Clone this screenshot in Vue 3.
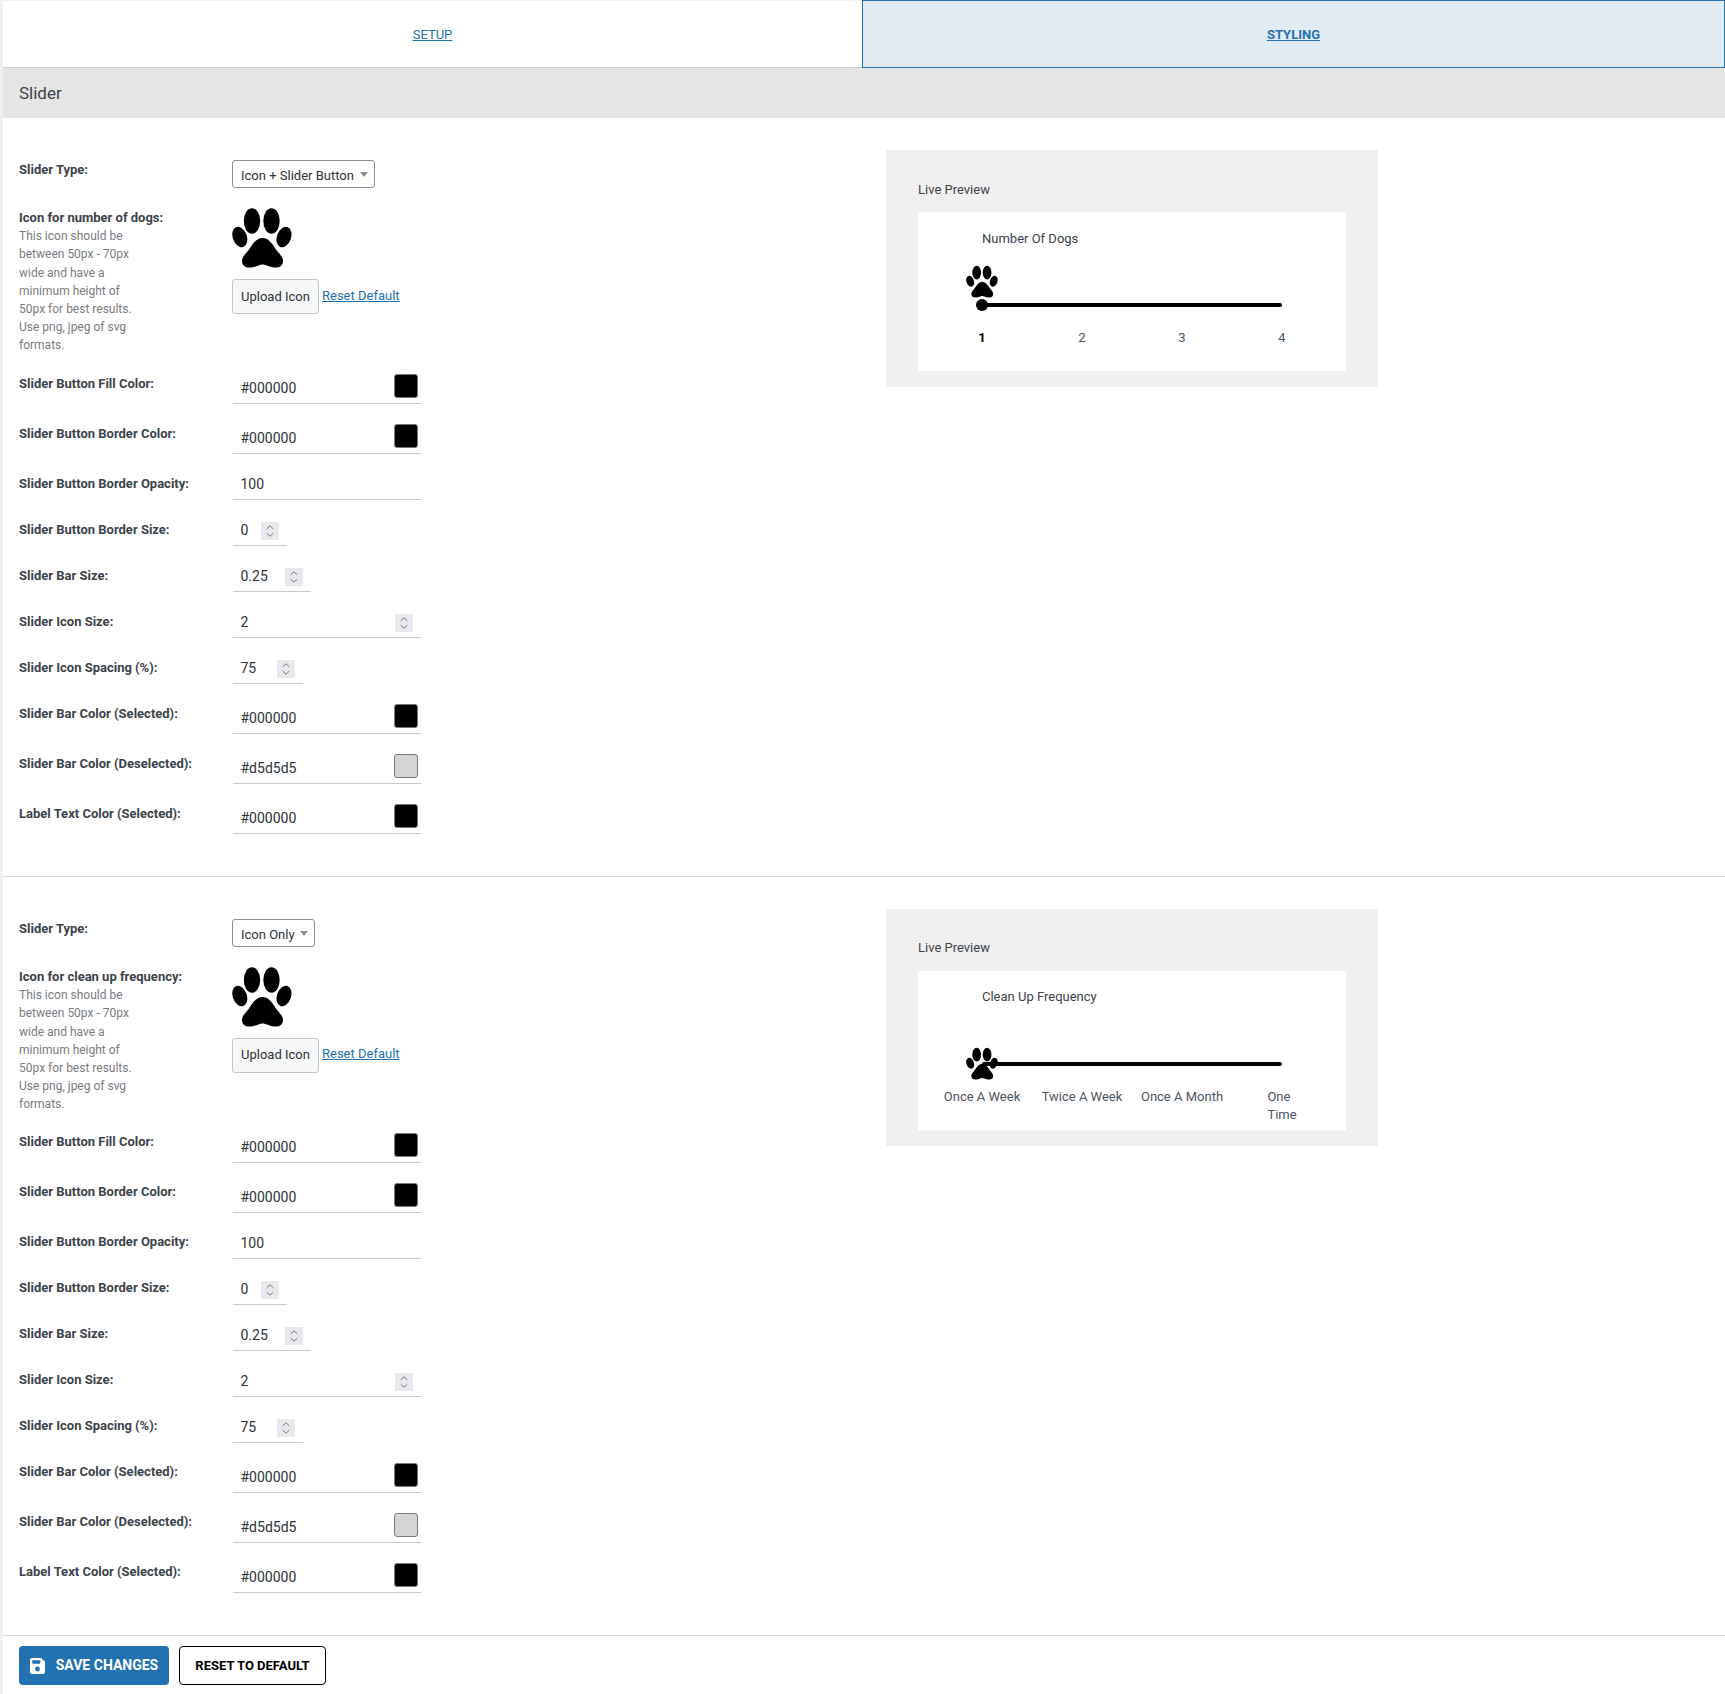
<script setup>
const sections = [
  {
    type: 'Icon + Slider Button',
    selectClass: 'select-wide',
    iconLabel: 'Icon for number of dogs:',
    title: 'Number Of Dogs',
    mode: 'button',
    sectionClass: '',
    labels: ['1', '2', '3', '4']
  },
  {
    type: 'Icon Only',
    selectClass: 'select-narrow',
    iconLabel: 'Icon for clean up frequency:',
    title: 'Clean Up Frequency',
    mode: 'icon',
    sectionClass: 'section-second',
    labels: ['Once A Week', 'Twice A Week', 'Once A Month', 'One Time']
  }
]

const rows = [
  { kind: 'color', label: 'Slider Button Fill Color:', value: '#000000', color: '#000000' },
  { kind: 'color', label: 'Slider Button Border Color:', value: '#000000', color: '#000000' },
  { kind: 'text', label: 'Slider Button Border Opacity:', value: '100', width: 188 },
  { kind: 'number', label: 'Slider Button Border Size:', value: '0', width: 54 },
  { kind: 'number', label: 'Slider Bar Size:', value: '0.25', width: 78 },
  { kind: 'number', label: 'Slider Icon Size:', value: '2', width: 188 },
  { kind: 'number', label: 'Slider Icon Spacing (%):', value: '75', width: 70 },
  { kind: 'color', label: 'Slider Bar Color (Selected):', value: '#000000', color: '#000000' },
  { kind: 'color', label: 'Slider Bar Color (Deselected):', value: '#d5d5d5', color: '#d5d5d5' },
  { kind: 'color', label: 'Label Text Color (Selected):', value: '#000000', color: '#000000' }
]
</script>

<template>
  <div class="page">
    <svg width="0" height="0" class="defs" aria-hidden="true">
      <symbol id="paw" viewBox="0 0 60 61">
        <ellipse cx="20" cy="14" rx="8.2" ry="12.8" />
        <ellipse cx="39.5" cy="14" rx="8.2" ry="12.8" />
        <ellipse cx="7.8" cy="30" rx="7" ry="10.6" transform="rotate(-20 7.8 30)" />
        <ellipse cx="52" cy="30" rx="7" ry="10.6" transform="rotate(20 52 30)" />
        <path d="M30.5 31C36 31 40 36 43 41C46 46 51 49 51 54C51 59 47 61 42 60.5C37 60 34 57.5 30.5 57.5C27 57.5 24 60 19 60.5C14 61 10 59 10 54C10 49 15 46 18 41C21 36 25 31 30.5 31Z" />
      </symbol>
    </svg>

    <nav class="tabs">
      <a class="tab tab-setup" href="#">SETUP</a>
      <a class="tab tab-styling" href="#">STYLING</a>
    </nav>

    <h2 class="heading">Slider</h2>

    <section v-for="s in sections" :key="s.title" class="section" :class="s.sectionClass">
      <div class="form">
        <div class="row row-select">
          <div class="label">Slider Type:</div>
          <div class="select" :class="s.selectClass">
            <span>{{ s.type }}</span>
            <i class="caret"></i>
          </div>
        </div>

        <div class="row row-icon">
          <div class="label icon-label">
            <div>{{ s.iconLabel }}</div>
            <div class="desc">This icon should be between 50px - 70px wide and have a minimum height of 50px for best results. Use png, jpeg of svg formats.</div>
          </div>
          <div class="icon-field">
            <svg class="paw-large"><use href="#paw" /></svg>
            <div class="upload-line">
              <button class="upload" type="button">Upload Icon</button>
              <a class="link" href="#">Reset Default</a>
            </div>
          </div>
        </div>

        <div v-for="r in rows" :key="r.label" class="row" :class="r.kind === 'color' ? 'row-color' : 'row-num'">
          <div class="label">{{ r.label }}</div>
          <div v-if="r.kind === 'color'" class="input input-color">
            <span>{{ r.value }}</span>
            <i class="swatch" :style="{ background: r.color }"></i>
          </div>
          <div v-else class="input input-num" :style="{ width: r.width + 'px' }">
            <span class="num-value">{{ r.value }}</span>
            <svg v-if="r.kind === 'number'" class="spin" viewBox="0 0 18 18">
              <path d="M5.7 6.8 9 3.8l3.3 3M5.7 11.2 9 14.2l3.3-3" />
            </svg>
          </div>
        </div>
      </div>

      <aside class="preview">
        <div class="preview-title">Live Preview</div>
        <div class="preview-card">
          <div class="slider-title">{{ s.title }}</div>
          <div class="track" :class="'track-' + s.mode">
            <svg class="paw-small"><use href="#paw" /></svg>
            <i v-if="s.mode === 'button'" class="knob"></i>
          </div>
          <div class="ticks">
            <div v-for="(l, i) in s.labels" :key="l" class="tick" :class="{ 'tick-on': s.mode === 'button' && i === 0 }">
              <span :class="{ 'tick-wrap': l === 'One Time' }">{{ l }}</span>
            </div>
          </div>
        </div>
      </aside>
    </section>

    <footer class="footer">
      <button class="btn btn-save" type="button">
        <svg class="save-icon" viewBox="0 0 15 16">
          <path fill-rule="evenodd" d="M2 0h9.3L15 3.7V14a2 2 0 0 1-2 2H2a2 2 0 0 1-2-2V2a2 2 0 0 1 2-2ZM3 2.2a.8.8 0 0 0-.8.8v2a.8.8 0 0 0 .8.8h6.5a.8.8 0 0 0 .8-.8V3a.8.8 0 0 0-.8-.8ZM7.5 8.6a2.4 2.4 0 1 0 0 4.8 2.4 2.4 0 0 0 0-4.8Z" />
        </svg>
        <span class="save-text">SAVE CHANGES</span>
      </button>
      <button class="btn btn-reset" type="button">RESET TO DEFAULT</button>
    </footer>
  </div>
</template>

<style>
body {
  background: #f0f0f1;
}
</style>

<style scoped>
.page {
  margin-left: 3px;
  height: 1694px;
  background: #fff;
  font-family: Roboto, "Liberation Sans", sans-serif;
  font-size: 13px;
  line-height: 18.2px;
  color: #3c434a;
  overflow: hidden;
}
.defs {
  position: absolute;
}
.tabs {
  display: flex;
  height: 68px;
}
.tab {
  display: flex;
  align-items: center;
  justify-content: center;
  box-sizing: border-box;
  padding-top: 2px;
  color: #2271b1;
}
.tab-setup {
  width: 859px;
  border-top: 1px solid #f0f0f1;
  border-bottom: 1px solid #ccc;
}
.tab-styling {
  flex: 1;
  border: 1px solid #2271b1;
  background: #e1ebf4;
  font-weight: 700;
}
.heading {
  margin: 0;
  height: 50px;
  padding-left: 16px;
  background: #e5e5e5;
  font-size: 17px;
  font-weight: 400;
  line-height: 50px;
}
.section {
  display: flex;
  box-sizing: border-box;
  height: 759px;
  border-bottom: 1px solid #ddd;
}
.form {
  flex: 0 0 883px;
  box-sizing: border-box;
  padding: 42px 0 0 16px;
}
.row {
  display: flex;
}
.label {
  flex: 0 0 213px;
  font-weight: 700;
}
.row-select .label {
  padding-top: 1px;
}
.row-icon {
  margin-top: 19px;
  height: 147px;
}
.row-color {
  margin-top: 10px;
  height: 40px;
}
.row-color .label {
  padding-top: 11px;
}
.row-num {
  margin-top: 16px;
  height: 30px;
}
.row-num .label {
  padding-top: 5px;
}
.section-second .row-color .label {
  padding-top: 10px;
}
.section-second .row-num .label {
  padding-top: 4px;
}
.select {
  display: flex;
  align-items: center;
  box-sizing: border-box;
  height: 28px;
  padding: 4px 0 0 8px;
  border: 1px solid #8c8f94;
  border-radius: 3px;
  color: #2c3338;
  position: relative;
}
.select-wide {
  width: 143px;
}
.select-narrow {
  width: 83px;
}
.caret {
  position: absolute;
  right: 6px;
  top: 11px;
  border-left: 4px solid transparent;
  border-right: 4px solid transparent;
  border-top: 5px solid #8c8f94;
}
.icon-label {
  padding-top: 2px;
}
.desc {
  width: 120px;
  font-size: 12px;
  font-weight: 400;
  color: #787c82;
}
.icon-field {
  display: flex;
  flex-direction: column;
}
.paw-large {
  width: 60px;
  height: 61px;
  fill: #000;
}
.upload-line {
  display: flex;
  align-items: center;
  gap: 3px;
  margin-top: 11px;
}
.upload {
  box-sizing: border-box;
  width: 87px;
  height: 35px;
  padding: 2px 0 0;
  border: 1px solid #c3c4c7;
  border-radius: 3px;
  background: #f6f7f7;
  color: #2c3338;
  font: inherit;
}
.section-second .upload {
  padding-top: 0;
}
.link {
  color: #2271b1;
}
.section-second .link {
  margin-bottom: 2px;
}
.input {
  display: flex;
  box-sizing: border-box;
  margin-left: 1px;
  border-bottom: 1px solid #c9c9c9;
  font-size: 14px;
  color: #2c3338;
}
.input-color {
  width: 188px;
  height: 40px;
  padding: 15px 2px 0 7.5px;
  justify-content: space-between;
  position: relative;
}
.swatch {
  position: absolute;
  right: 3px;
  top: 10px;
  box-sizing: border-box;
  width: 24px;
  height: 24px;
  border: 1px solid #76797d;
  border-radius: 3px;
}
.input-num {
  height: 30px;
  padding: 5px 0 0 7.5px;
  align-items: flex-start;
  justify-content: space-between;
}
.spin {
  width: 18px;
  height: 18px;
  margin: 1px 8px 0 0;
  background: #e9e9ed;
  fill: none;
  stroke: #76767b;
  stroke-width: 1;
}
.preview {
  box-sizing: border-box;
  width: 492px;
  height: 237px;
  margin-top: 32px;
  padding: 31px 32px 0;
  background: #f0f0f0;
}
.preview-title {
  height: 31px;
}
.section-second .preview {
  padding-top: 30px;
}
.section-second .preview-title {
  height: 32px;
}
.preview-card {
  box-sizing: border-box;
  height: 159px;
  padding-top: 18px;
  background: #fff;
}
.section-second .preview-card {
  padding-top: 17px;
}
.slider-title {
  margin-left: 64px;
}
.track {
  position: relative;
  width: 300px;
  height: 4px;
  margin: 55px 0 0 64px;
  border-radius: 2px;
  background: #000;
}
.section-second .track {
  margin-top: 56px;
}
.paw-small {
  position: absolute;
  left: -16px;
  width: 32px;
  height: 33px;
  fill: #000;
}
.track-button .paw-small {
  top: -38px;
}
.track-icon .paw-small {
  top: -15px;
}
.knob {
  position: absolute;
  left: -6px;
  top: -4px;
  width: 12px;
  height: 12px;
  border-radius: 50%;
  background: #000;
}
.ticks {
  display: flex;
  margin: 22px 0 0 14px;
}
.tick {
  flex: 0 0 100px;
  text-align: center;
  color: #4b5563;
}
.tick-on {
  font-weight: 700;
  color: #000;
}
.tick-wrap {
  display: inline-block;
  width: min-content;
  text-align: left;
}
.footer {
  display: flex;
  gap: 10px;
  padding: 10px 0 0 16px;
}
.btn {
  display: flex;
  align-items: center;
  justify-content: center;
  box-sizing: border-box;
  height: 39px;
  padding: 0;
  border-radius: 4px;
  font-family: inherit;
  font-weight: 700;
}
.btn-save {
  width: 150px;
  gap: 11px;
  border: 0;
  background: #2271b1;
  color: #fff;
  font-size: 14px;
}
.save-icon {
  width: 15px;
  height: 16px;
  fill: #fff;
}
.save-text {
  padding-bottom: 2px;
}
.btn-reset {
  width: 147px;
  border: 1px solid #000;
  background: #fff;
  color: #000;
  font-size: 13px;
}
</style>
